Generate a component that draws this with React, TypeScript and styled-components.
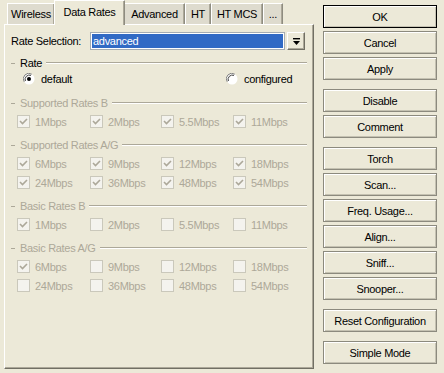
import React from "react";
import styled, { createGlobalStyle, css } from "styled-components";

const GlobalStyle = createGlobalStyle`
  html, body { margin: 0; padding: 0; background: #ECE9D8; }
  body {
    font-family: "Liberation Sans", Arial, sans-serif;
    font-size: 11px;
    letter-spacing: -0.3px;
    color: #000;
  }
`;

const Window = styled.div`
  width: 444px;
  height: 373px;
  display: flex;
  flex-direction: row;
  padding-left: 4px;
  box-sizing: border-box;
  gap: 9px;
  background: #ECE9D8;
  overflow: hidden;
`;

const LeftCol = styled.div`
  width: 310px;
  display: flex;
  flex-direction: column;
`;

const TabBar = styled.div`
  height: 24px;
  display: flex;
  align-items: flex-end;
  padding-left: 3px;
  position: relative;
  z-index: 2;
`;

const Tab = styled.div<{ $active?: boolean; $w: number }>`
  width: ${(p) => p.$w}px;
  height: 21px;
  box-sizing: border-box;
  display: flex;
  align-items: center;
  justify-content: center;
  background: #DEDBCE;
  border-top: 1px solid #FFFFFF;
  border-left: 1px solid #FFFFFF;
  border-right: 1px solid #8E8C80;
  box-shadow: inset -1px 0 0 #ACA899;
  white-space: nowrap;
  ${(p) =>
    p.$active &&
    css`
      width: ${p.$w + 2}px;
      height: 25px;
      margin: 0 -1px -1px -1px;
      padding-bottom: 2px;
      background: #ECE9D8;
      position: relative;
      z-index: 3;
    `}
`;

const Panel = styled.div`
  width: 310px;
  height: 345px;
  box-sizing: border-box;
  border-top: 1px solid #FFFFFF;
  border-left: 1px solid #FFFFFF;
  border-right: 1px solid #716F64;
  border-bottom: 1px solid #716F64;
  box-shadow: inset -1px -1px 0 #ACA899;
  padding: 7px 6px 0 6px;
  display: flex;
  flex-direction: column;
`;

const SelectRow = styled.div`
  height: 18px;
  display: flex;
  align-items: center;
`;

const SelectLabel = styled.span`
  width: 79px;
`;

const Combo = styled.div`
  width: 195px;
  height: 18px;
  box-sizing: border-box;
  border: 1px solid #A5ACB2;
  padding: 1px;
  background: #FFFFFF;
`;

const ComboSel = styled.div`
  height: 100%;
  background: #316AC5;
  color: #FFFFFF;
  display: flex;
  align-items: center;
  padding-left: 1px;
`;

const DropBtn = styled.div`
  width: 18px;
  height: 18px;
  margin-left: 2px;
  box-sizing: border-box;
  background: #ECE9D8;
  border-top: 1px solid #FFFFFF;
  border-left: 1px solid #FFFFFF;
  border-right: 1px solid #716F64;
  border-bottom: 1px solid #716F64;
  box-shadow: inset -1px -1px 0 #ACA899;
  display: flex;
  align-items: center;
  justify-content: center;
`;

const GroupHeader = styled.div<{ $disabled?: boolean; $mt: number }>`
  height: 14px;
  margin-top: ${(p) => p.$mt}px;
  display: flex;
  align-items: center;
  color: ${(p) => (p.$disabled ? "#ACA899" : "#000")};
`;

const HeaderDash = styled.span`
  width: 4px;
  height: 1px;
  background: #ACA899;
  margin-right: 5px;
`;

const HeaderLine = styled.span`
  flex: 1;
  height: 0;
  margin-left: 4px;
  border-top: 1px solid #ACA899;
  border-bottom: 1px solid #FFFFFF;
`;

const RadioRow = styled.div`
  height: 16px;
  margin-top: 1px;
  margin-left: 12px;
  display: grid;
  grid-template-columns: 203px auto;
  align-items: center;
`;

const Option = styled.label`
  display: flex;
  align-items: center;
  gap: 6px;
`;

const Rows = styled.div`
  margin-top: 2px;
  margin-left: 6px;
  display: grid;
  grid-template-columns: 73px 71px 72px 72px;
  grid-auto-rows: 19px;
  align-items: center;
`;

const CheckItem = styled.div`
  display: flex;
  align-items: center;
  gap: 5px;
  color: #ACA899;
`;

const CheckBox = styled.span`
  width: 13px;
  height: 13px;
  box-sizing: border-box;
  border: 1px solid #CAC8BB;
  background: #F4F3EE;
  display: flex;
  align-items: center;
  justify-content: center;
`;

const ButtonCol = styled.div`
  width: 114px;
  padding-top: 5px;
  display: flex;
  flex-direction: column;
`;

const Button = styled.div<{ $default?: boolean; $gap?: boolean }>`
  height: 23px;
  margin-top: ${(p) => (p.$gap ? 9 : 3)}px;
  &:first-child { margin-top: 0; }
  box-sizing: border-box;
  background: #ECE9D8;
  border: 1px solid ${(p) => (p.$default ? "#000000" : "#8C8A7E")};
  box-shadow: inset 1px 1px 0 #FFFFFF, inset -1px -1px 0 #C5C2B2;
  display: flex;
  align-items: center;
  justify-content: center;
`;

const Radio = ({ checked }: { checked?: boolean }) => (
  <svg width="12" height="12" viewBox="0 0 12 12">
    <circle cx="6" cy="6" r="5.5" fill="#FFFFFF" />
    <path d="M1.2 8.8 A5.5 5.5 0 0 1 8.8 1.2" fill="none" stroke="#808080" strokeWidth="1" />
    <path d="M2.4 8 A4.3 4.3 0 0 1 8 2.4" fill="none" stroke="#404040" strokeWidth="1" />
    {checked && <circle cx="6" cy="6" r="2" fill="#000000" />}
  </svg>
);

const Check = () => (
  <svg width="9" height="9" viewBox="0 0 9 9">
    <path d="M1 4 L3.5 6.5 L8 2" fill="none" stroke="#ACA899" strokeWidth="1.6" />
  </svg>
);

const DropIcon = () => (
  <svg width="9" height="9" viewBox="0 0 9 9">
    <rect x="1" y="1" width="7" height="1.4" fill="#000" />
    <path d="M1 4 L8 4 L4.5 8 Z" fill="#000" />
  </svg>
);

type Rate = { label: string; checked: boolean };

const groups: { title: string; rates: Rate[] }[] = [
  {
    title: "Supported Rates B",
    rates: [
      { label: "1Mbps", checked: true },
      { label: "2Mbps", checked: true },
      { label: "5.5Mbps", checked: true },
      { label: "11Mbps", checked: true },
    ],
  },
  {
    title: "Supported Rates A/G",
    rates: [
      { label: "6Mbps", checked: true },
      { label: "9Mbps", checked: true },
      { label: "12Mbps", checked: true },
      { label: "18Mbps", checked: true },
      { label: "24Mbps", checked: true },
      { label: "36Mbps", checked: true },
      { label: "48Mbps", checked: true },
      { label: "54Mbps", checked: true },
    ],
  },
  {
    title: "Basic Rates B",
    rates: [
      { label: "1Mbps", checked: true },
      { label: "2Mbps", checked: false },
      { label: "5.5Mbps", checked: false },
      { label: "11Mbps", checked: false },
    ],
  },
  {
    title: "Basic Rates A/G",
    rates: [
      { label: "6Mbps", checked: true },
      { label: "9Mbps", checked: false },
      { label: "12Mbps", checked: false },
      { label: "18Mbps", checked: false },
      { label: "24Mbps", checked: false },
      { label: "36Mbps", checked: false },
      { label: "48Mbps", checked: false },
      { label: "54Mbps", checked: false },
    ],
  },
];

const buttons: { label: string; gap?: boolean; def?: boolean }[] = [
  { label: "OK", def: true },
  { label: "Cancel" },
  { label: "Apply" },
  { label: "Disable", gap: true },
  { label: "Comment" },
  { label: "Torch", gap: true },
  { label: "Scan..." },
  { label: "Freq. Usage..." },
  { label: "Align..." },
  { label: "Sniff..." },
  { label: "Snooper..." },
  { label: "Reset Configuration", gap: true },
  { label: "Simple Mode", gap: true },
];

const tabs: { label: string; w: number }[] = [
  { label: "Wireless", w: 48 },
  { label: "Data Rates", w: 69 },
  { label: "Advanced", w: 61 },
  { label: "HT", w: 26 },
  { label: "HT MCS", w: 52 },
  { label: "...", w: 20 },
];

export default function App() {
  return (
    <>
      <GlobalStyle />
      <Window>
        <LeftCol>
          <TabBar>
            {tabs.map((t) => (
              <Tab key={t.label} $w={t.w} $active={t.label === "Data Rates"}>
                {t.label}
              </Tab>
            ))}
          </TabBar>
          <Panel>
            <SelectRow>
              <SelectLabel>Rate Selection:</SelectLabel>
              <Combo>
                <ComboSel>advanced</ComboSel>
              </Combo>
              <DropBtn>
                <DropIcon />
              </DropBtn>
            </SelectRow>
            <GroupHeader $mt={6}>
              <HeaderDash />
              Rate
              <HeaderLine />
            </GroupHeader>
            <RadioRow>
              <Option>
                <Radio checked />
                default
              </Option>
              <Option>
                <Radio />
                configured
              </Option>
            </RadioRow>
            {groups.map((g, i) => (
              <React.Fragment key={g.title}>
                <GroupHeader $disabled $mt={i === 0 ? 9 : 7}>
                  <HeaderDash />
                  {g.title}
                  <HeaderLine />
                </GroupHeader>
                <Rows>
                  {g.rates.map((r) => (
                    <CheckItem key={r.label}>
                      <CheckBox>{r.checked && <Check />}</CheckBox>
                      {r.label}
                    </CheckItem>
                  ))}
                </Rows>
              </React.Fragment>
            ))}
          </Panel>
        </LeftCol>
        <ButtonCol>
          {buttons.map((b) => (
            <Button key={b.label} $gap={b.gap} $default={b.def}>
              {b.label}
            </Button>
          ))}
        </ButtonCol>
      </Window>
    </>
  );
}
